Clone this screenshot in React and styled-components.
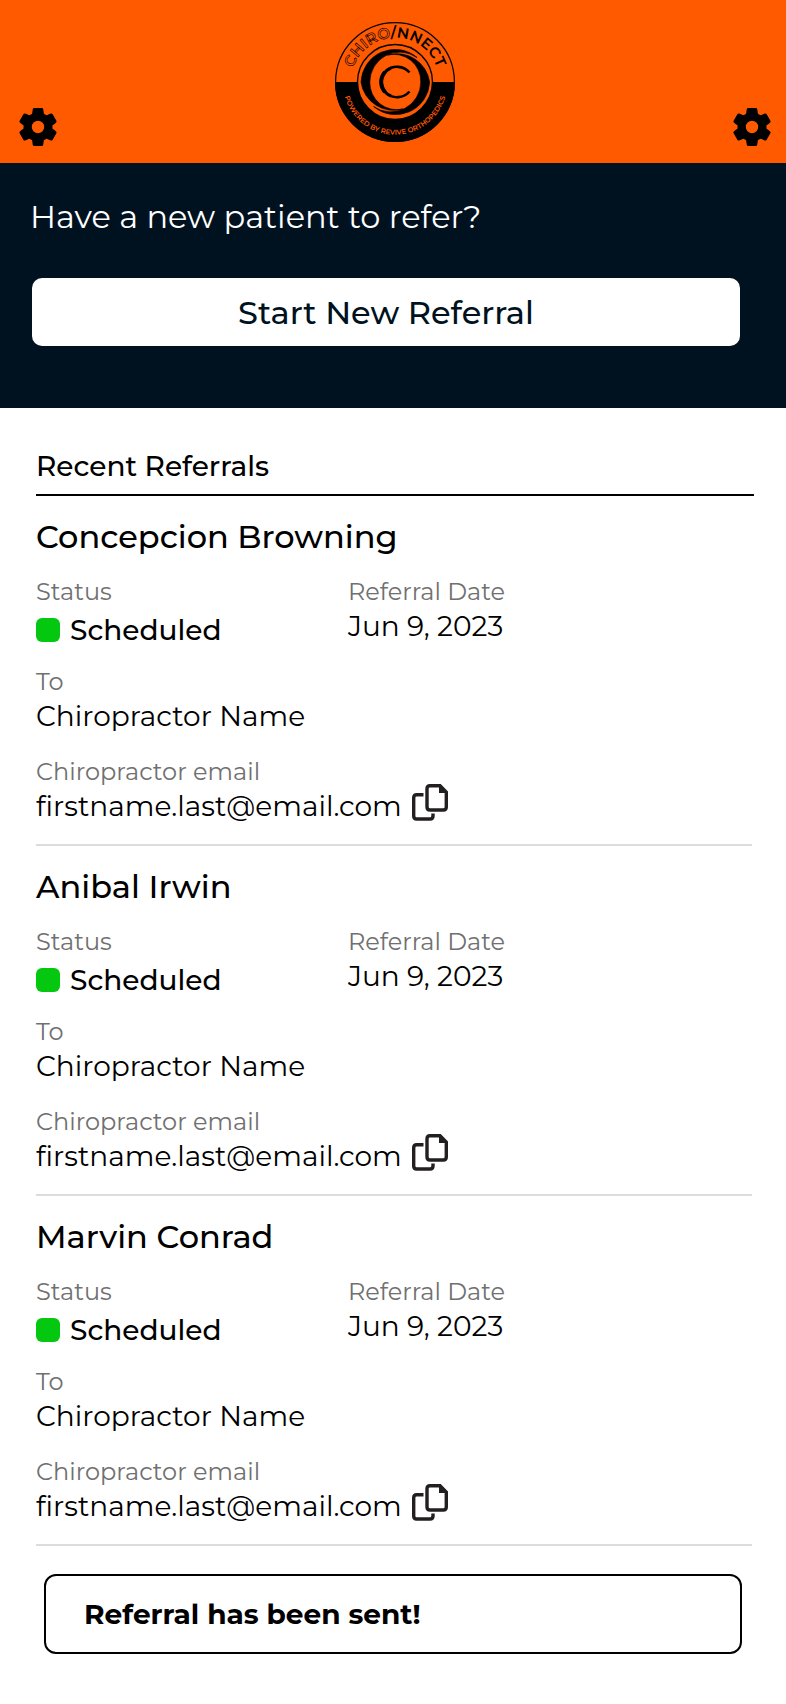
import React from 'react';
import styled, { createGlobalStyle } from 'styled-components';
import { MdSettings } from 'react-icons/md';

const GlobalStyle = createGlobalStyle`
  * {
    box-sizing: border-box;
  }

  body {
    margin: 0;
    background: #ffffff;
    color: #000000;
    font-family: Montserrat, Inter, sans-serif;
  }
`;

// Styled Components
const PageWrapper = styled.div`
  width: 100%;
`;

const TopBar = styled.header`
  display: flex;
  justify-content: space-between;
  align-items: flex-end;
  padding: 22px 11px 13px 15px;
  background: #ff5a00;
`;

const IconButton = styled.button`
  display: flex;
  padding: 0;
  border: none;
  background: none;
  color: #000000;
  cursor: pointer;
`;

const GearIcon = styled(MdSettings)`
  width: 46px;
  height: 46px;
  stroke-width: 0.7;

  /* the icon carries an invisible bounding path */
  path[fill='none'] {
    stroke: none;
  }
`;

const CopyButton = styled(IconButton)`
  margin-top: -4px;
`;

const LogoLink = styled.a`
  display: flex;
  margin-bottom: 8px;
  color: #000000;
`;

const HeroSection = styled.section`
  display: flex;
  flex-direction: column;
  padding: 34px 46px 62px 30px;
  background: #001220;
`;

const HeroTitle = styled.h1`
  margin: 0 0 41px;
  color: #ffffff;
  font-size: 32px;
  font-weight: 400;
  line-height: 40px;
`;

const ReferralButton = styled.button`
  height: 68px;
  margin-left: 2px;
  border: none;
  border-radius: 10px;
  background: #ffffff;
  color: #001220;
  font-family: inherit;
  font-size: 32px;
  font-weight: 500;
  cursor: pointer;
`;

const Content = styled.main`
  padding: 38px 32px 50px 36px;
`;

const SectionTitle = styled.h2`
  margin: 0;
  padding-bottom: 8px;
  border-bottom: 2px solid #000000;
  font-size: 28px;
  font-weight: 500;
  line-height: 40px;
`;

const ReferralList = styled.ul`
  margin: 0 2px 28px 0;
  padding: 0;
  list-style: none;
`;

const ReferralItem = styled.li`
  padding-top: 21px;
  border-bottom: 2px solid #dcdcdc;
`;

const PatientName = styled.h3`
  margin: 0 0 20px;
  font-size: 32px;
  font-weight: 500;
  line-height: 40px;
`;

const FieldRow = styled.div`
  display: grid;
  grid-template-columns: 312px 1fr;
  min-height: 90px;

  &:last-child {
    grid-template-columns: 1fr;
    min-height: 87px;
  }
`;

const Label = styled.div`
  margin-bottom: 1px;
  color: #707070;
  font-size: 24px;
  font-weight: 400;
  line-height: 30px;
`;

const Value = styled.div`
  display: flex;
  align-items: ${({ $strong }) => ($strong ? 'center' : 'flex-start')};
  gap: 10px;
  font-size: 28px;
  font-weight: ${({ $strong }) => ($strong ? 500 : 400)};
  line-height: ${({ $strong }) => ($strong ? '44px' : '36px')};
`;

const StatusDot = styled.span`
  width: 24px;
  height: 24px;
  border-radius: 6px;
  background: #04c810;
`;

const Notice = styled.div`
  margin: 0 12px 0 8px;
  padding: 20px 38px;
  border: 2px solid #000000;
  border-radius: 12px;
  font-size: 28px;
  font-weight: 700;
  line-height: 36px;
`;

const LogoText = styled.text`
  font-size: ${({ $size }) => $size}px;
  font-weight: 600;
`;

const referrals = [
  { name: 'Concepcion Browning', status: 'Scheduled', date: 'Jun 9, 2023', to: 'Chiropractor Name', email: 'firstname.last@email.com' },
  { name: 'Anibal Irwin', status: 'Scheduled', date: 'Jun 9, 2023', to: 'Chiropractor Name', email: 'firstname.last@email.com' },
  { name: 'Marvin Conrad', status: 'Scheduled', date: 'Jun 9, 2023', to: 'Chiropractor Name', email: 'firstname.last@email.com' },
];

const swirl = 'M82 35.5 A34 34 0 0 0 26 60 A33 33 0 0 0 68 87 A27 27 0 0 1 34.8 60 A30 30 0 0 1 82 35.5 Z';

const Logo = () => (
  <svg width="120" height="120" viewBox="0 0 120 120" role="img" aria-label="Chiro/nnect">
    <defs>
      <path id="logo-top" d="M 16 64 A 44.2 44.2 0 1 1 104 64" />
      <path id="logo-bottom" d="M 8 56 A 52.2 52.2 0 1 0 112 56" />
    </defs>
    <circle cx="60" cy="60" r="59.4" fill="none" stroke="#000" strokeWidth="1.2" />
    <path d="M0 60 A60 60 0 0 0 120 60 Z" />
    <circle cx="60" cy="60" r="37.5" fill="#ff5a00" stroke="#000" strokeWidth="1.4" />
    <g stroke="#000" strokeWidth="0.7">
      <path d={swirl} />
      <path d={swirl} transform="rotate(180 60.3 60)" />
    </g>
    <LogoText $size={15}>
      <textPath href="#logo-top" startOffset="50%" textAnchor="middle">
        <tspan fill="none" stroke="#000" strokeWidth="0.6">CHIRO</tspan>/NNECT
      </textPath>
    </LogoText>
    <LogoText $size={7} fill="#ff5a00">
      <textPath href="#logo-bottom" startOffset="50%" textAnchor="middle">POWERED BY REVIVE ORTHOPEDICS</textPath>
    </LogoText>
    <g fill="none" stroke="#000">
      <path d="M74.5 50.5 A16 15.2 0 1 0 74.5 69.5" strokeWidth="2.6" />
      <path d="M56 46 A15 15 0 0 0 56 74" strokeWidth="3" />
      <path d="M50 50 A15 15 0 0 0 50 70" strokeWidth="4" />
    </g>
  </svg>
);

const CopyIcon = () => (
  <svg width="36" height="37" viewBox="0 0 36 37" fill="none" stroke="#231f20" strokeWidth="3.4" aria-hidden="true">
    <path d="M11.5 10.8 H4.7 Q1.7 10.8 1.7 13.8 V32 Q1.7 35 4.7 35 H18 Q21 35 21 32 V29.5" />
    <path d="M18 1.7 H28 L34.3 8.2 V23 Q34.3 26 31.3 26 H18 Q15 26 15 23 V4.7 Q15 1.7 18 1.7 Z" />
    <path d="M27 1 V9 H35 V7.5 L28.7 1 Z" fill="#231f20" stroke="none" />
  </svg>
);

const Referral = ({ name, status, date, to, email }) => {
  const handleCopy = () => {
    navigator.clipboard?.writeText(email);
  };

  return (
    <ReferralItem>
      <PatientName>{name}</PatientName>
      <FieldRow>
        <div>
          <Label>Status</Label>
          <Value $strong>
            <StatusDot />
            {status}
          </Value>
        </div>
        <div>
          <Label>Referral Date</Label>
          <Value>{date}</Value>
        </div>
      </FieldRow>
      <FieldRow>
        <div>
          <Label>To</Label>
          <Value>{to}</Value>
        </div>
      </FieldRow>
      <FieldRow>
        <div>
          <Label>Chiropractor email</Label>
          <Value>
            {email}
            <CopyButton type="button" aria-label="Copy email" onClick={handleCopy}>
              <CopyIcon />
            </CopyButton>
          </Value>
        </div>
      </FieldRow>
    </ReferralItem>
  );
};

const App = () => (
  <PageWrapper>
    <GlobalStyle />
    <TopBar>
      <IconButton type="button" aria-label="Menu settings">
        <GearIcon />
      </IconButton>
      <LogoLink href="#home">
        <Logo />
      </LogoLink>
      <IconButton type="button" aria-label="Account settings">
        <GearIcon />
      </IconButton>
    </TopBar>

    <HeroSection>
      <HeroTitle>Have a new patient to refer?</HeroTitle>
      <ReferralButton type="button">Start New Referral</ReferralButton>
    </HeroSection>

    <Content>
      <SectionTitle>Recent Referrals</SectionTitle>
      <ReferralList>
        {referrals.map((referral) => (
          <Referral key={referral.name} {...referral} />
        ))}
      </ReferralList>
      <Notice role="status">Referral has been sent!</Notice>
    </Content>
  </PageWrapper>
);

export default App;
